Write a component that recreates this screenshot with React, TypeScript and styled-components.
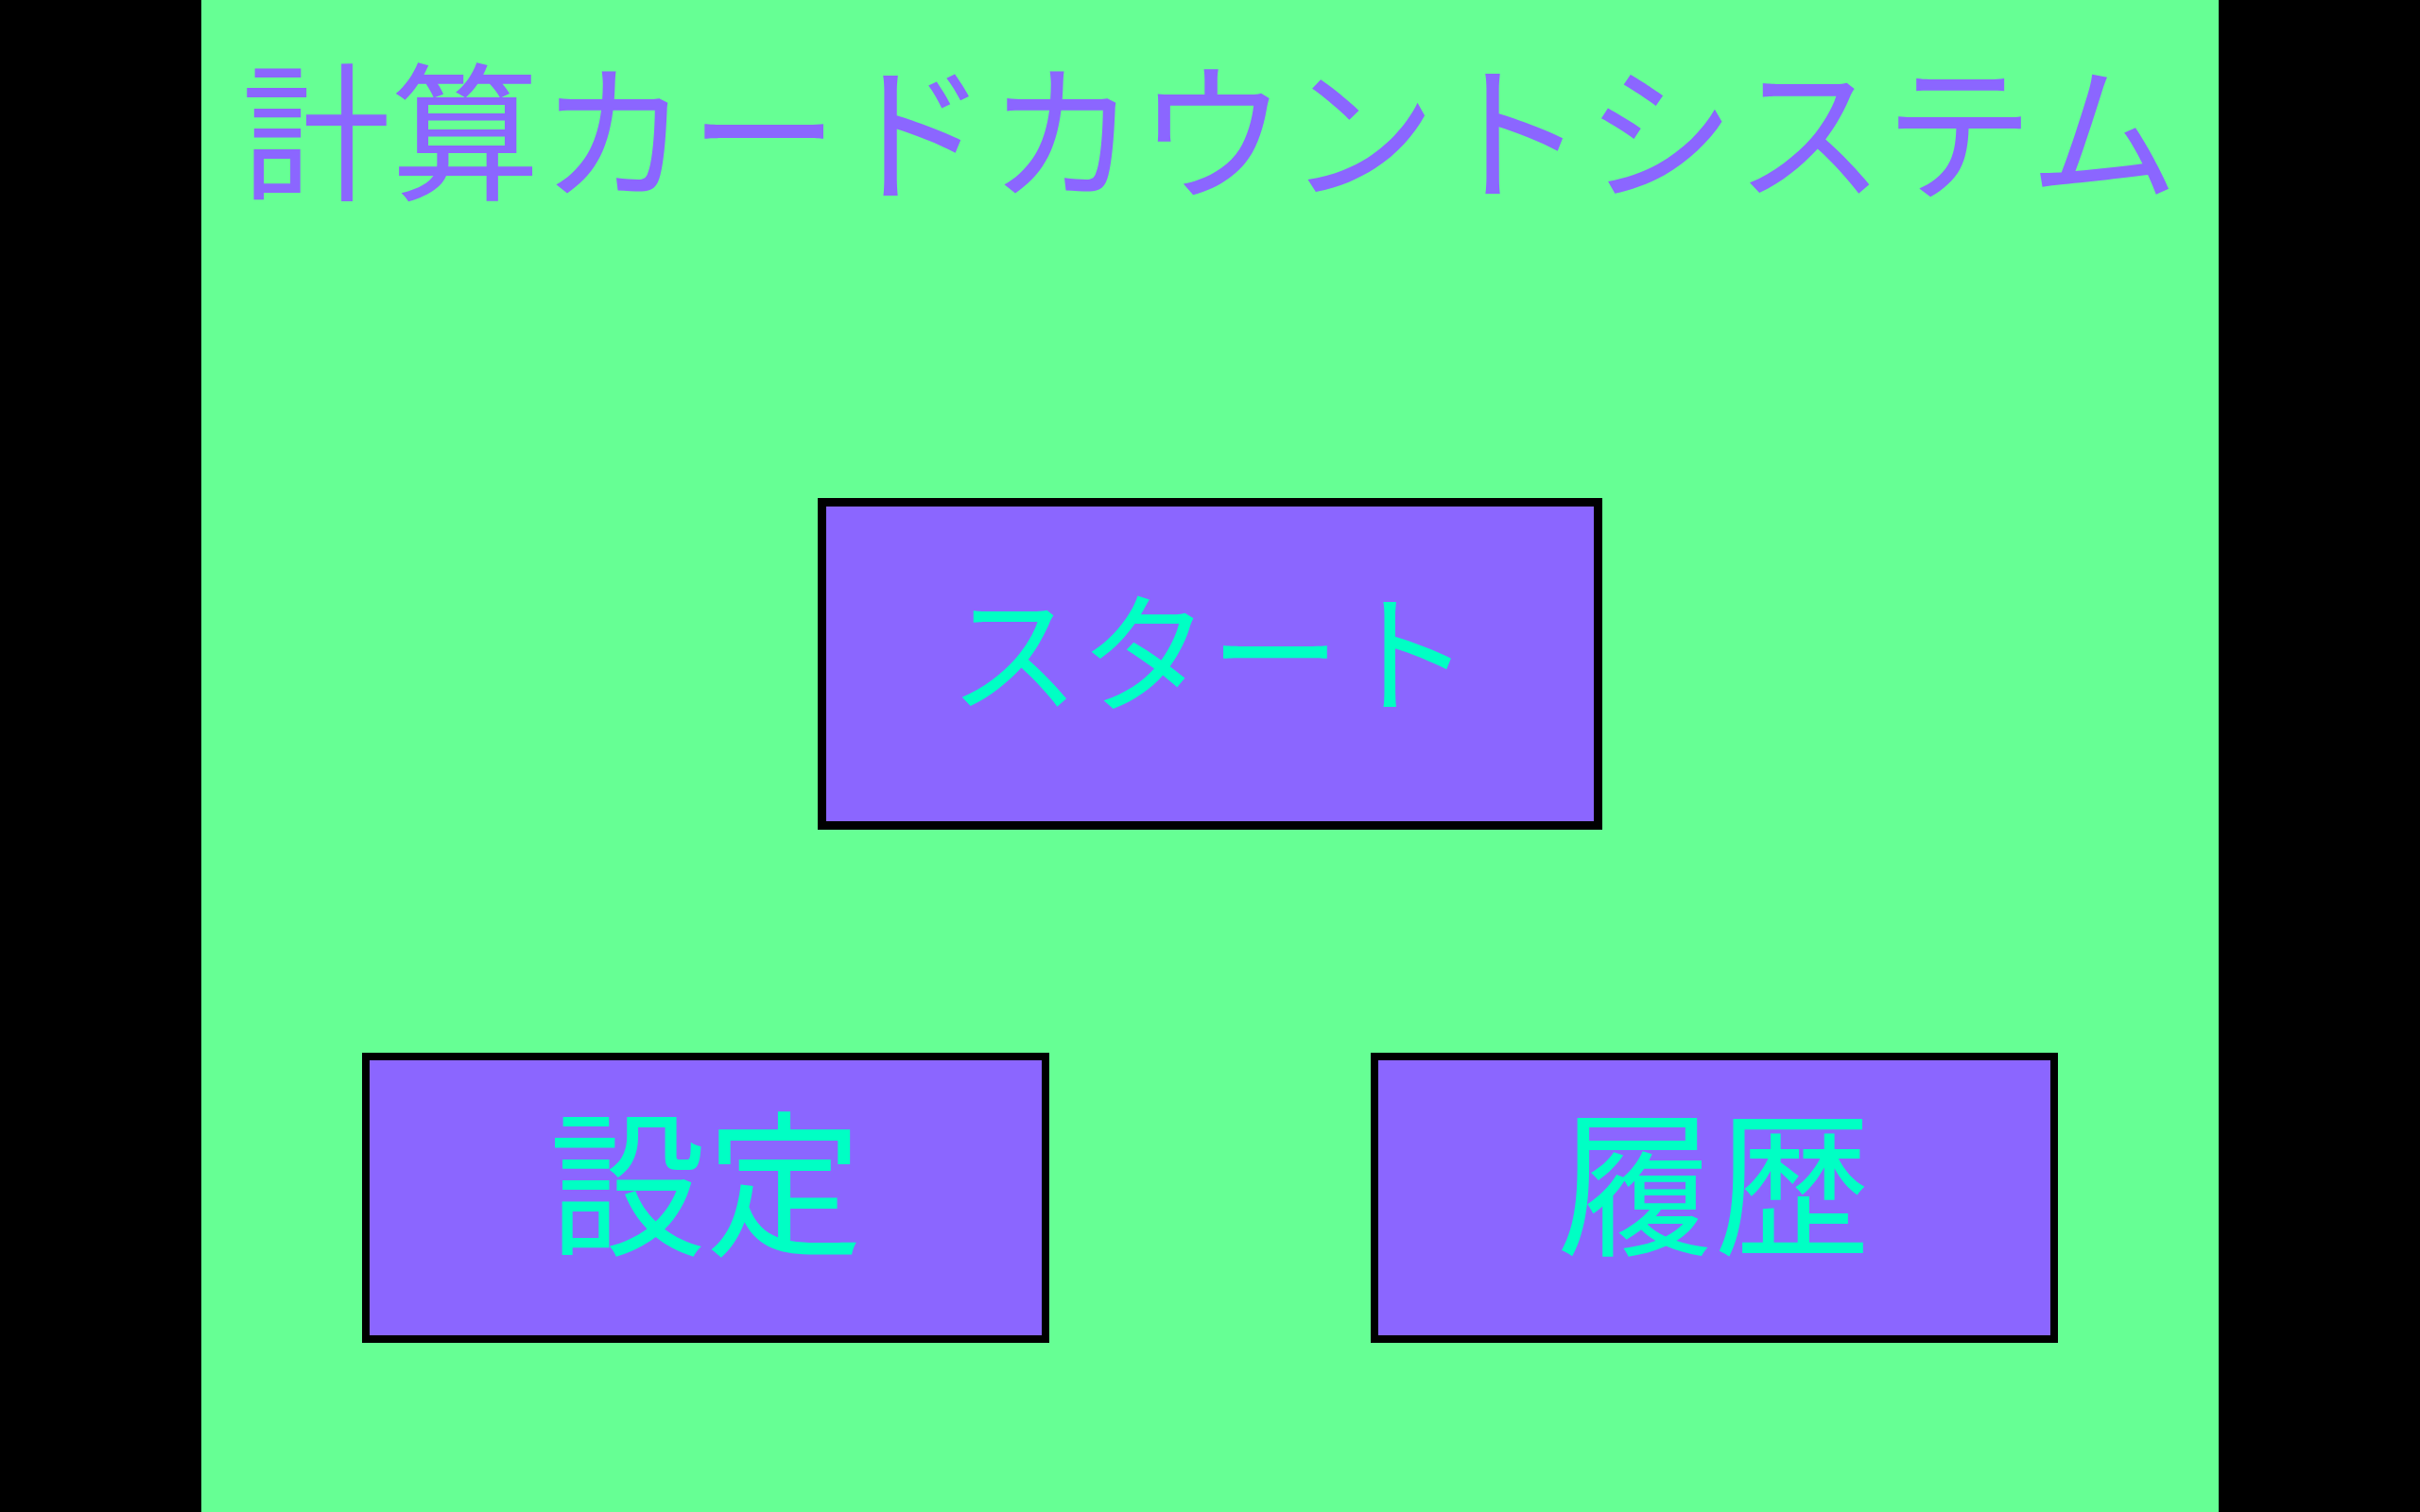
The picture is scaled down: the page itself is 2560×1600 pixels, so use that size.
import React from "react";
import styled, { createGlobalStyle } from "styled-components";

const GlobalStyle = createGlobalStyle`
  *, *::before, *::after {
    box-sizing: border-box;
  }

  body {
    margin: 0;
    background: #000;
    font-family: "Noto Sans CJK JP", "Noto Sans", sans-serif;
  }
`;

const Screen = styled.div`
  display: flex;
  justify-content: center;
  min-height: 100vh;
  background: #000;
`;

const Stage = styled.main`
  display: flex;
  flex-direction: column;
  align-items: center;
  width: calc(100vh * 4 / 3);
  max-width: 100%;
  padding-top: 32px;
  background: #66ff94;
`;

const Title = styled.h1`
  margin: 0;
  color: #8b66ff;
  font-size: 158px;
  font-weight: 400;
  line-height: 200px;
  white-space: nowrap;
`;

const MenuButton = styled.button<{ $primary?: boolean }>`
  display: flex;
  align-items: center;
  justify-content: center;
  width: ${({ $primary }) => ($primary ? "830px" : "727px")};
  max-width: 100%;
  height: ${({ $primary }) => ($primary ? "351px" : "307px")};
  padding: 0 0 ${({ $primary }) => ($primary ? "40px" : "48px")};
  border: ${({ $primary }) => ($primary ? "9px" : "8px")} solid #000;
  border-radius: 0;
  background: #8b66ff;
  color: #00ffc4;
  font-family: inherit;
  font-size: ${({ $primary }) => ($primary ? "138px" : "166px")};
  font-weight: 400;
  line-height: 200px;
  white-space: nowrap;
  cursor: pointer;
`;

const Menu = styled.nav`
  display: flex;
  flex-direction: column;
  align-items: center;
  gap: 236px;
  width: 100%;
  margin-top: 295px;
`;

const SubMenu = styled.div`
  display: grid;
  grid-template-columns: 1fr 1fr;
  justify-items: center;
  width: 100%;
`;

export default function App() {
  return (
    <Screen>
      <GlobalStyle />
      <Stage>
        <Title>計算カードカウントシステム</Title>
        <Menu>
          <MenuButton type="button" $primary>
            スタート
          </MenuButton>
          <SubMenu>
            <MenuButton type="button">設定</MenuButton>
            <MenuButton type="button">履歴</MenuButton>
          </SubMenu>
        </Menu>
      </Stage>
    </Screen>
  );
}
